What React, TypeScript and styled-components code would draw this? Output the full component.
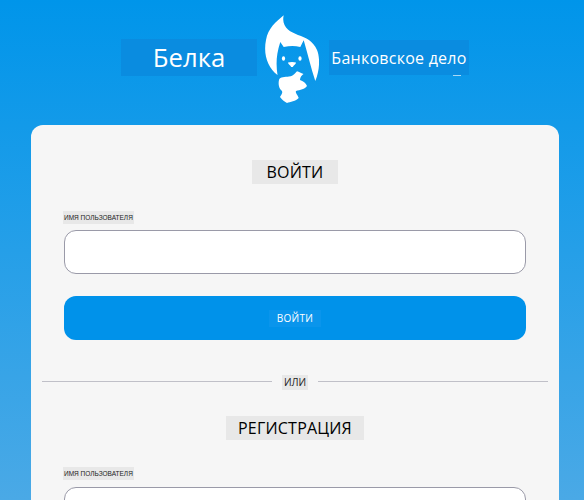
import styled, { createGlobalStyle } from 'styled-components'

const GlobalStyle = createGlobalStyle`
  html, body {
    margin: 0;
    height: 100%;
    overflow: hidden;
  }

  body {
    font-family: "Open Sans", "Noto Sans", sans-serif;
    background: linear-gradient(180deg, #0095ea 0%, #4aa9e6 100%);
  }
`

const Page = styled.div`
  height: 500px;
  overflow: hidden;
  padding: 15px 25px 0 31px;
  box-sizing: border-box;
`

const Header = styled.header`
  display: flex;
  align-items: center;
  justify-content: center;
  height: 89px;
  margin-bottom: 21px;
`

const BrandName = styled.div`
  width: 136px;
  height: 37px;
  margin: 0 8px 4px 0;
  display: flex;
  align-items: center;
  justify-content: center;
  background: #0a8ce0;
  color: #fff;
  font-size: 25.7px;
`

const BrandTag = styled.div`
  position: relative;
  width: 140px;
  height: 35px;
  margin: 0 0 4px 10px;
  display: flex;
  align-items: center;
  justify-content: center;
  background: #0a8ce0;
  color: #fff;
  font-size: 16px;
  letter-spacing: 0.25px;
  white-space: nowrap;

  &::after {
    content: "";
    position: absolute;
    right: 8px;
    bottom: -1px;
    width: 8px;
    height: 1px;
    background: #a9d8f5;
  }
`

const Card = styled.main`
  width: 528px;
  background: #f6f6f6;
  border-radius: 12px;
  padding: 35px 33px 0;
  box-sizing: border-box;
`

const Title = styled.h2<{ $pad: number }>`
  width: fit-content;
  margin: 0 auto 27px;
  padding: 0 ${({ $pad }) => $pad}px;
  height: 24px;
  line-height: 24px;
  background: #e8e8e8;
  color: #000;
  font-size: 16px;
  font-weight: 400;
  letter-spacing: 0.2px;
`

const FieldLabel = styled.label`
  display: block;
  width: fit-content;
  margin: 0 0 6.4px -1px;
  padding: 0 1px;
  height: 13px;
  line-height: 13px;
  background: #e8e8e8;
  color: #222;
  font-family: "Liberation Sans", Arial, sans-serif;
  font-size: 6.5px;
`

const Input = styled.input`
  display: block;
  width: 100%;
  height: 44px;
  box-sizing: border-box;
  border: 1px solid #9a9aa8;
  border-radius: 12px;
  background: #fff;
  margin-bottom: 22px;
`

const SubmitButton = styled.button`
  display: flex;
  align-items: center;
  justify-content: center;
  width: 100%;
  height: 44px;
  border: 0;
  border-radius: 12px;
  background: #0092ea;
  padding: 0;
`

const SubmitText = styled.span`
  padding: 0 7.5px;
  height: 17px;
  line-height: 17px;
  background: #0a95ec;
  color: #fff;
  font-family: "Open Sans", sans-serif;
  font-size: 10px;
  letter-spacing: 0.3px;
`

const Divider = styled.div`
  display: flex;
  align-items: center;
  gap: 10px;
  margin: 35px -22px 26px;
`

const DividerLine = styled.span`
  flex: 1;
  height: 1px;
  margin-bottom: 2px;
  background: #c0c0c8;
`

const DividerText = styled.span`
  padding: 0 2px;
  height: 15px;
  line-height: 15px;
  background: #e8e8e8;
  color: #222;
  font-size: 10px;
`

function Logo() {
  return (
    <svg width="54" height="90" viewBox="265 15 54 90" aria-hidden="true">
      {/* tail wrapping round the head, the head itself is the background showing through */}
      <path
        fill="#fff"
        d="M283.7 15.3C276 22 268 28 266 40C263 55 268 68 277.5 75C276 65 276 55 280.3 42L283.7 47C290 45.5 295 45.5 300.3 47L303.7 40.3C308 55 311 68 315.3 81C320 70 320 57 317 50C313 41 306 37.5 298 35C290 32 281 27 283.7 15.3Z"
      />
      <path
        fill="#fff"
        d="M297 71.3C295 73 294 76 289 76.5C285 77 280 76.5 279 80C278 84 279 89 282 91C283 93 281 95 280 97C282 100 285 102 287 103C290 102 296 101 298.7 98C298 95 295 93 296 91C300 90 305 89 307 86C306 83 303 81 300 80C300 77 302 75 303.5 74C301 73 299 72 297 71.3Z"
      />
      <ellipse cx="283.5" cy="58.5" rx="1.6" ry="2.2" fill="#fff" />
      <ellipse cx="300" cy="58.5" rx="1.6" ry="2.2" fill="#fff" />
      <path fill="#fff" d="M288 62.5C290 61.8 294 61.8 296 62.5C296 64.5 293.5 65 292.8 67H291.2C290.5 65 288 64.5 288 62.5Z" />
    </svg>
  )
}

export default function App() {
  return (
    <>
      <GlobalStyle />
      <Page>
        <Header>
          <BrandName>Белка</BrandName>
          <Logo />
          <BrandTag>Банковское дело</BrandTag>
        </Header>
        <Card>
          <Title $pad={15}>ВОЙТИ</Title>
          <FieldLabel htmlFor="login">ИМЯ ПОЛЬЗОВАТЕЛЯ</FieldLabel>
          <Input id="login" />
          <SubmitButton type="button">
            <SubmitText>ВОЙТИ</SubmitText>
          </SubmitButton>
          <Divider>
            <DividerLine />
            <DividerText>ИЛИ</DividerText>
            <DividerLine />
          </Divider>
          <Title $pad={12}>РЕГИСТРАЦИЯ</Title>
          <FieldLabel htmlFor="signup">ИМЯ ПОЛЬЗОВАТЕЛЯ</FieldLabel>
          <Input id="signup" />
        </Card>
      </Page>
    </>
  )
}
